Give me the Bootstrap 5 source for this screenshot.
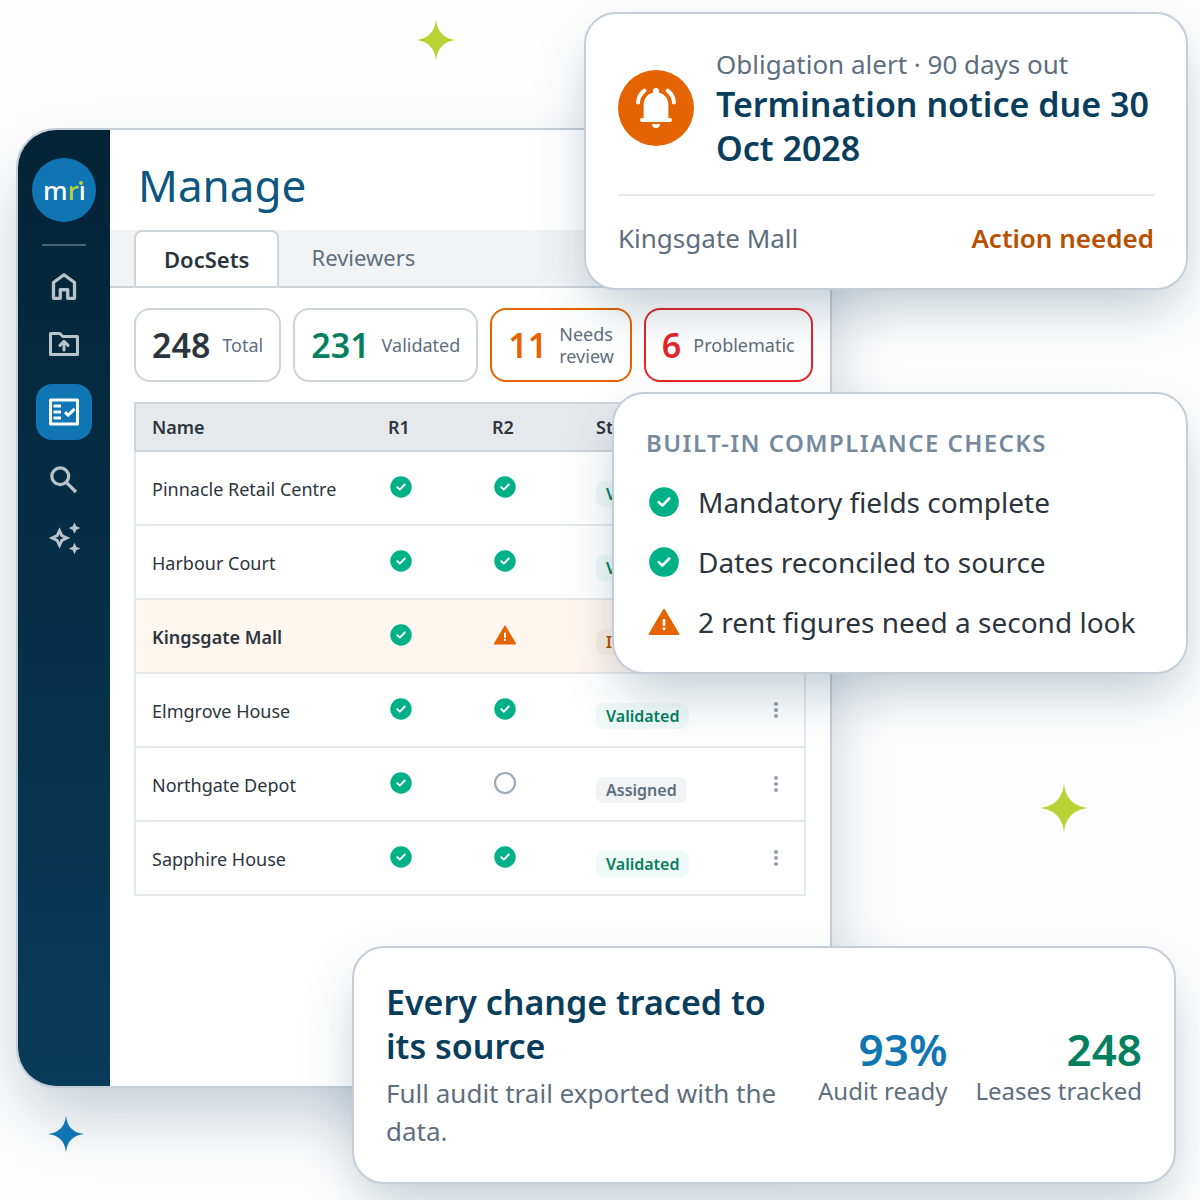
<!DOCTYPE html>
<html lang="en">
<head>
<meta charset="utf-8">
<meta name="viewport" content="width=device-width, initial-scale=1">
<title>Manage DocSets</title>
<link href="https://cdn.jsdelivr.net/npm/bootstrap@5.3.0/dist/css/bootstrap.min.css" rel="stylesheet">
<style>
  :root { --line:#c4ced8; --navy:#093d5c; --slate:#5f6e7d; --ink:#2c353d; --green:#04805f; --blue:#0f75b3; --orange:#e56300; --red:#e3262b; --amber:#b85000; }
  body { font-family:"Noto Sans",sans-serif; color:var(--ink); background:#fefefe; }
  svg { display:block; flex-shrink:0; }
  .scene { min-height:1200px; padding:128px 0 112px 16px; overflow:hidden; }
  .app-window { width:69%; max-width:816px; min-height:960px; border:2px solid var(--line); border-radius:40px; background:#fff; overflow:hidden; box-shadow:0 32px 72px -8px rgba(5,45,75,.25); }
  .app-main { min-width:0; }
  .side-rail { width:92px; padding-top:28px; gap:22px; background:linear-gradient(#042336,#083b59); flex-shrink:0; }
  .brand-dot { width:64px; height:64px; background:var(--blue); }
  .rail-rule { width:44px; height:2px; background:#4a6373; }
  .rail-link { width:56px; height:36px; color:#b9c3ca; }
  .rail-link.active { height:56px; border-radius:16px; background:var(--blue); color:#fff; }
  .page-title { font-size:44px; line-height:60px; font-weight:400; color:#0d5680; padding:25px 28px 15px; margin:0; }
  .doc-tabs { background:#f2f3f5; border-bottom:2px solid #cdd4da; padding:0 24px; gap:2px; height:58px; }
  .doc-tabs .nav-link { height:56px; padding:0 28px 4px; border:2px solid transparent; border-bottom:0; border-radius:8px 8px 0 0; font-size:22px; line-height:30px; color:var(--slate); margin:0; }
  .doc-tabs .nav-link.active { padding-bottom:0; background:#fff; border-color:#cdd4da; color:var(--ink); font-weight:600; }
  .work-area { padding:20px 24px; }
  .tallies { gap:12px; }
  .tally { height:74px; padding:0 16px; gap:12px; border:2px solid #cdd4da; border-radius:16px; font-size:18px; line-height:22px; color:var(--slate); }
  .tally strong { font-size:34px; line-height:44px; font-weight:600; color:var(--ink); }
  .tally-ok strong { color:var(--green); }
  .tally-warn { border-color:var(--orange); } .tally-warn strong { color:var(--orange); }
  .tally-bad { border-color:var(--red); } .tally-bad strong { color:var(--red); }
  .doc-table { margin-top:20px; width:100%; border-collapse:separate; border-spacing:0; font-size:18px; line-height:26px; table-layout:fixed; }
  .doc-table th, .doc-table td { padding:0 16px; vertical-align:middle; }
  .doc-table thead th { height:50px; background:#e6e9ec; font-weight:600; border:solid #cdd4da; border-width:2px 0; }
  .doc-table tbody th, .doc-table tbody td { height:74px; border-bottom:2px solid #e5e9ed; }
  .doc-table tbody th { font-weight:400; padding-top:2px; }
  .doc-table td.mark-cell { padding-bottom:2px; }
  .doc-table td.state-cell { padding-top:12px; }
  .doc-table tr > :first-child { border-left:2px solid #e5e9ed; }
  .doc-table tr > :last-child { border-right:2px solid #e5e9ed; }
  .doc-table thead tr > :first-child, .doc-table thead tr > :last-child { border-color:#cdd4da; }
  .doc-table tr.flagged > * { background:#fff6f0; }
  .doc-table tr.flagged th { font-weight:600; }
  .col-name { width:238px; } .col-check { width:104px; } .col-more { width:58px; }
  .state { display:block; width:fit-content; padding:0 10px; border-radius:8px; font-size:16px; line-height:26px; font-weight:600; white-space:nowrap; background:#f2f3f5; color:var(--slate); }
  .state-ok { background:#f0faf8; color:var(--green); }
  .state-hot { background:#fbeee4; color:var(--amber); }
  .dots { display:block; border:0; padding:0; background:none; color:#98a5b1; }
  .float-card { position:absolute; background:#fff; border:2px solid var(--line); border-radius:32px; padding:32px; box-shadow:0 24px 56px -8px rgba(5,45,75,.26); }
  .alert-card { top:12px; right:12px; width:604px; }
  .check-card { top:392px; right:12px; width:576px; }
  .trace-card { top:946px; right:24px; width:824px; }
  .body-26 { font-size:26px; line-height:36px; color:var(--slate); }
  .due { color:var(--amber); }
  .headline { font-size:34px; line-height:44px; font-weight:600; color:var(--navy); margin:0; }
  .bell-dot { width:76px; height:76px; background:var(--orange); flex-shrink:0; }
  .alert-top { gap:22px; padding-bottom:24px; border-bottom:2px solid #e5e9ed; }
  .eyebrow { font-size:24px; line-height:34px; font-weight:600; letter-spacing:.06em; color:#778a9d; margin:0 0 24px; }
  .check-list { gap:24px; font-size:28px; line-height:36px; margin:0; }
  .check-list li { display:flex; align-items:center; gap:16px; }
  .trace-note { font-size:26px; line-height:38px; color:var(--slate); margin:6px 0 0; }
  .figures { gap:28px; }
  .figure-num { font-size:44px; line-height:52px; font-weight:600; }
  .figure-cap { font-size:24px; line-height:32px; color:var(--slate); white-space:nowrap; }
  .star { position:absolute; }
  .star-a { left:416px; top:20px; } .star-b { left:1040px; top:784px; } .star-c { left:48px; top:1116px; }
  .c-green { color:var(--green); } .c-blue { color:var(--blue); } .c-lime { color:#b9d335; }
</style>
<script src="https://cdn.jsdelivr.net/npm/bootstrap@5.3.0/dist/js/bootstrap.bundle.min.js"></script>
</head>
<body>
<svg width="0" height="0" class="position-absolute" aria-hidden="true">
  <symbol id="ok" viewBox="0 0 24 24"><circle cx="12" cy="12" r="9.900" fill="#00b086"/><path d="M8.500 12.100l2.400 2.300 4.600-4.700" fill="none" stroke="#fff" stroke-width="1.800" stroke-linecap="round" stroke-linejoin="round"/></symbol>
  <symbol id="warn" viewBox="0 0 24 24"><path d="M2.500 20 12 4l9.500 16z" fill="#e56300" stroke="#e56300" stroke-width="1.400" stroke-linejoin="round"/><path d="M11.100 10h1.800v4.500h-1.800zM11.100 15.700h1.800v1.800h-1.800z" fill="#fff"/></symbol>
  <symbol id="open" viewBox="0 0 24 24"><circle cx="12" cy="12" r="9.200" fill="#fff" stroke="#9ca9b6" stroke-width="2"/></symbol>
  <symbol id="more" viewBox="0 0 24 24"><circle cx="12" cy="6" r="2.100" fill="currentColor"/><circle cx="12" cy="12" r="2.100" fill="currentColor"/><circle cx="12" cy="18" r="2.100" fill="currentColor"/></symbol>
  <symbol id="star" viewBox="0 0 24 24"><path fill="currentColor" d="M12 0C12.900 7.300 16.700 11.100 24 12 16.700 12.900 12.900 16.700 12 24 11.100 16.700 7.300 12.900 0 12 7.300 11.100 11.100 7.300 12 0z"/></symbol>
</svg>

<div class="scene position-relative">
  <div class="app-window d-flex">
    <nav class="side-rail d-flex flex-column align-items-center" aria-label="Main">
      <a href="#" class="brand-dot rounded-circle d-flex align-items-center justify-content-center" aria-label="mri home">
        <svg width="48" height="40" viewBox="0 0 48 40"><text x="3" y="30" font-family="Noto Sans, sans-serif" font-size="26" font-weight="500" fill="#fff">m<tspan fill="#b9d335">r</tspan>i</text><rect x="37" y="7" width="8" height="7" fill="#0f75b3"/><circle cx="41" cy="13" r="2" fill="#b9d335"/></svg>
      </a>
      <div class="rail-rule"></div>
      <a href="#" class="rail-link d-flex align-items-center justify-content-center" aria-label="Home"><svg width="36" height="36" viewBox="0 0 24 24" fill="none" stroke="currentColor" stroke-width="2.200" stroke-linejoin="round"><path d="M5 9.700 12 4.500l7 5.200V20.200h-4.500v-5.700H9.500v5.700H5z"/></svg></a>
      <a href="#" class="rail-link d-flex align-items-center justify-content-center" aria-label="Upload"><svg width="36" height="36" viewBox="0 0 24 24" fill="none" stroke="currentColor" stroke-width="2" stroke-linejoin="round" stroke-linecap="round"><path d="M3 5h6.200l2 2H21v12H3z"/><path d="M12 16v-5.500M9.300 12.900 12 10.200l2.700 2.700"/></svg></a>
      <a href="#" class="rail-link active d-flex align-items-center justify-content-center" aria-label="Manage"><svg width="36" height="36" viewBox="0 0 24 24" fill="none" stroke="currentColor" stroke-width="2" stroke-linejoin="round"><path d="M3 4h18v16H3z"/><path d="M5 8h5M5 12h5M5 16h5M12.700 12.100l2.100 2.100 4.200-4.300"/></svg></a>
      <a href="#" class="rail-link d-flex align-items-center justify-content-center" aria-label="Search"><svg width="36" height="36" viewBox="0 0 24 24" fill="none" stroke="currentColor" stroke-width="2.200"><circle cx="9.500" cy="9.500" r="5.600"/><path d="M13.700 13.700 20 20"/></svg></a>
      <a href="#" class="rail-link d-flex align-items-center justify-content-center" aria-label="Assistant"><svg width="36" height="36" viewBox="0 0 24 24" fill="currentColor"><path fill-rule="evenodd" d="M9 4.800 11.300 9.700 16.200 12 11.300 14.300 9 19.200 6.700 14.300 1.800 12 6.700 9.700zM9 9.300 8.200 11.200 6.300 12 8.200 12.800 9 14.700 9.800 12.800 11.700 12 9.800 11.200z"/><path d="M19 1.600l1.200 2.600 2.600 1.200-2.600 1.200L19 9.200l-1.200-2.600-2.600-1.200 2.600-1.200zM19 15.200l1.200 2.600 2.600 1.200-2.600 1.200-1.200 2.600-1.200-2.600-2.600-1.200 2.600-1.200z"/></svg></a>
    </nav>

    <main class="app-main flex-grow-1">
      <h1 class="page-title">Manage</h1>
      <div class="doc-tabs nav nav-tabs flex-nowrap" role="tablist">
        <button type="button" class="nav-link active" role="tab" aria-selected="true">DocSets</button>
        <button type="button" class="nav-link" role="tab" aria-selected="false">Reviewers</button>
      </div>
      <div class="work-area">
        <div class="tallies d-flex">
          <div class="tally d-flex align-items-center"><strong>248</strong><span>Total</span></div>
          <div class="tally tally-ok d-flex align-items-center"><strong>231</strong><span>Validated</span></div>
          <div class="tally tally-warn d-flex align-items-center"><strong>11</strong><span>Needs review</span></div>
          <div class="tally tally-bad d-flex align-items-center"><strong>6</strong><span>Problematic</span></div>
        </div>
        <table class="doc-table">
          <colgroup><col class="col-name"><col class="col-check"><col class="col-check"><col><col class="col-more"></colgroup>
          <thead><tr><th scope="col">Name</th><th scope="col">R1</th><th scope="col">R2</th><th scope="col">Status</th><th></th></tr></thead>
          <tbody>
            <tr><th scope="row">Pinnacle Retail Centre</th><td class="mark-cell"><svg width="26" height="26"><use href="#ok"/></svg></td><td class="mark-cell"><svg width="26" height="26"><use href="#ok"/></svg></td><td class="state-cell"><span class="state state-ok">Validated</span></td><td><button class="dots" type="button" aria-label="More"><svg width="24" height="24"><use href="#more"/></svg></button></td></tr>
            <tr><th scope="row">Harbour Court</th><td class="mark-cell"><svg width="26" height="26"><use href="#ok"/></svg></td><td class="mark-cell"><svg width="26" height="26"><use href="#ok"/></svg></td><td class="state-cell"><span class="state state-ok">Validated</span></td><td><button class="dots" type="button" aria-label="More"><svg width="24" height="24"><use href="#more"/></svg></button></td></tr>
            <tr class="flagged"><th scope="row">Kingsgate Mall</th><td class="mark-cell"><svg width="26" height="26"><use href="#ok"/></svg></td><td class="mark-cell"><svg width="26" height="26"><use href="#warn"/></svg></td><td class="state-cell"><span class="state state-hot">In review</span></td><td><button class="dots" type="button" aria-label="More"><svg width="24" height="24"><use href="#more"/></svg></button></td></tr>
            <tr><th scope="row">Elmgrove House</th><td class="mark-cell"><svg width="26" height="26"><use href="#ok"/></svg></td><td class="mark-cell"><svg width="26" height="26"><use href="#ok"/></svg></td><td class="state-cell"><span class="state state-ok">Validated</span></td><td><button class="dots" type="button" aria-label="More"><svg width="24" height="24"><use href="#more"/></svg></button></td></tr>
            <tr><th scope="row">Northgate Depot</th><td class="mark-cell"><svg width="26" height="26"><use href="#ok"/></svg></td><td class="mark-cell"><svg width="26" height="26"><use href="#open"/></svg></td><td class="state-cell"><span class="state">Assigned</span></td><td><button class="dots" type="button" aria-label="More"><svg width="24" height="24"><use href="#more"/></svg></button></td></tr>
            <tr><th scope="row">Sapphire House</th><td class="mark-cell"><svg width="26" height="26"><use href="#ok"/></svg></td><td class="mark-cell"><svg width="26" height="26"><use href="#ok"/></svg></td><td class="state-cell"><span class="state state-ok">Validated</span></td><td><button class="dots" type="button" aria-label="More"><svg width="24" height="24"><use href="#more"/></svg></button></td></tr>
          </tbody>
        </table>
      </div>
    </main>
  </div>

  <section class="float-card alert-card">
    <div class="alert-top d-flex align-items-center">
      <div class="bell-dot rounded-circle d-flex align-items-center justify-content-center">
        <svg width="48" height="48" viewBox="0 0 24 24" fill="#fff"><path d="M5.800 17v-6.800a6.200 6.200 0 0 1 4.700-6V3.500a1.500 1.500 0 0 1 3 0v.7a6.200 6.200 0 0 1 4.700 6V17H19a1 1 0 0 1 0 2H5a1 1 0 0 1 0-2zM10 20h4a2 2 0 0 1-4 0z"/><path d="M3 9.200C3.200 6.800 4.200 4.800 6.200 3.300M21 9.200C20.800 6.800 19.800 4.800 17.800 3.300" fill="none" stroke="#fff" stroke-width="2" stroke-linecap="round"/></svg>
      </div>
      <div>
        <div class="body-26">Obligation alert · 90 days out</div>
        <h2 class="headline">Termination notice due 30 Oct 2028</h2>
      </div>
    </div>
    <div class="body-26 d-flex justify-content-between pt-4"><span>Kingsgate Mall</span><span class="due fw-semibold">Action needed</span></div>
  </section>

  <section class="float-card check-card">
    <h2 class="eyebrow">BUILT-IN COMPLIANCE CHECKS</h2>
    <ul class="check-list list-unstyled d-flex flex-column">
      <li><svg width="36" height="36"><use href="#ok"/></svg>Mandatory fields complete</li>
      <li><svg width="36" height="36"><use href="#ok"/></svg>Dates reconciled to source</li>
      <li><svg width="36" height="36"><use href="#warn"/></svg>2 rent figures need a second look</li>
    </ul>
  </section>

  <section class="float-card trace-card d-flex align-items-center">
    <div class="flex-grow-1 pe-4">
      <h2 class="headline">Every change traced to its source</h2>
      <p class="trace-note">Full audit trail exported with the data.</p>
    </div>
    <div class="figures d-flex text-end">
      <div><div class="figure-num c-blue">93%</div><div class="figure-cap">Audit ready</div></div>
      <div><div class="figure-num c-green">248</div><div class="figure-cap">Leases tracked</div></div>
    </div>
  </section>

  <svg class="star star-a c-lime" width="40" height="40" aria-hidden="true"><use href="#star"/></svg>
  <svg class="star star-b c-lime" width="48" height="48" aria-hidden="true"><use href="#star"/></svg>
  <svg class="star star-c c-blue" width="36" height="36" aria-hidden="true"><use href="#star"/></svg>
</div>
</body>
</html>
